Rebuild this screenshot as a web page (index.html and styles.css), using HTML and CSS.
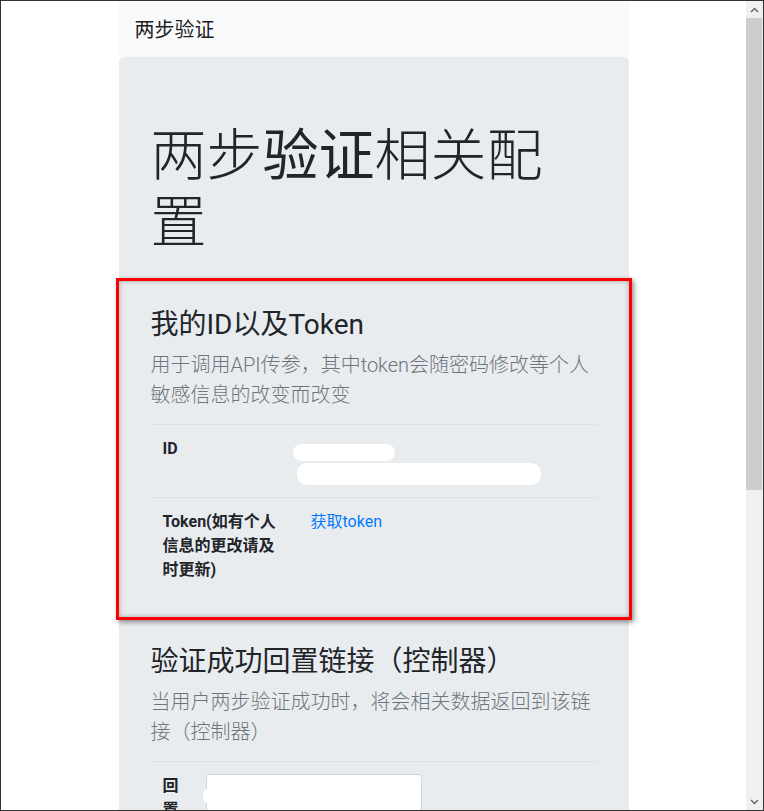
FILE: index.html
```html
<!DOCTYPE html>
<html lang="zh-CN">
<head>
<meta charset="utf-8">
<title>两步验证</title>
<link rel="stylesheet" href="styles.css">
</head>
<body>
<div class="window">
  <div class="viewport">
    <div class="container">
      <nav class="navbar"><span class="brand">两步验证</span></nav>
      <div class="jumbotron">
        <h1 class="display">两步<span class="reg">验证</span>相关配置</h1>

        <section class="panel annotated">
          <h3 class="panel-title">我的ID以及Token</h3>
          <p class="lead">用于调用API传参，其中token会随密码修改等个人敏感信息的改变而改变</p>
          <table class="table">
            <tr>
              <th class="label-wide">ID</th>
              <td><span class="redact r1"></span><span class="redact r2"></span></td>
            </tr>
            <tr>
              <th class="label-wide">Token(如有个人信息的更改请及时更新)</th>
              <td><a class="link" href="#">获取token</a></td>
            </tr>
          </table>
        </section>

        <section class="panel">
          <h3 class="panel-title">验证成功回置链接（控制器）</h3>
          <p class="lead">当用户两步验证成功时，将会相关数据返回到该链接（控制器）</p>
          <table class="table">
            <tr>
              <th class="label-narrow">回置链接</th>
              <td><div class="input-wrap"><span class="redact r3"></span><input class="input" type="text" value=""></div></td>
            </tr>
          </table>
        </section>
      </div>
    </div>
  </div>
  <div class="scrollbar">
    <div class="sb-btn">
      <svg width="9" height="6" viewBox="0 0 9 6"><path d="M1 5 L4.5 1.5 L8 5" fill="none" stroke="#606060" stroke-width="1.4"/></svg>
    </div>
    <div class="sb-track"><div class="sb-thumb"></div></div>
    <div class="sb-btn">
      <svg width="9" height="6" viewBox="0 0 9 6"><path d="M1 1 L4.5 4.5 L8 1" fill="none" stroke="#606060" stroke-width="1.4"/></svg>
    </div>
  </div>
</div>
</body>
</html>
```

FILE: styles.css
```css
* { box-sizing: border-box; }

html, body {
  margin: 0;
  padding: 0;
  background: #fff;
}

body {
  font-family: Roboto, "Noto Sans CJK SC", sans-serif;
  font-size: 16px;
  line-height: 1.5;
  color: #212529;
}

.window {
  display: flex;
  width: 764px;
  height: 811px;
  border: 1px solid #333;
  overflow: hidden;
}

.viewport {
  flex: 1;
  overflow: hidden;
  background: #fff;
}

.container {
  width: 540px;
  margin: 0 auto;
  padding: 0 15px;
}

.navbar {
  display: flex;
  align-items: center;
  height: 56px;
  padding: 8px 16px;
  background: #f8f9fa;
}

.brand {
  font-size: 20px;
  line-height: 30px;
  padding-top: 2px;
  color: rgba(0, 0, 0, 0.9);
}

.jumbotron {
  background: #e9ecef;
  border-radius: 4.8px;
  padding: 66px 32px 32px;
}

.display {
  margin: 0 0 8px;
  font-size: 56px;
  line-height: 1.2;
  font-weight: 300;
  color: #212529;
}

.display .reg {
  font-weight: 400;
}

.panel-title {
  margin: 0 0 8px;
  font-size: 28px;
  line-height: 1.2;
  font-weight: 400;
}

.lead {
  margin: 0 0 14px;
  font-size: 20px;
  line-height: 30px;
  font-weight: 300;
  color: #6c757d;
}

.panel {
  margin-top: 0;
}

.annotated {
  margin: 21px -35px 25px;
  padding: 27px 32px 23px;
  border: 3px solid #ff0000;
  box-shadow: 2px 2px 5px rgba(0, 0, 0, 0.45), inset 0 0 5px rgba(0, 0, 0, 0.3);
}

.table {
  width: 100%;
  border-collapse: collapse;
  margin: 0;
}

.table th,
.table td {
  padding: 12px;
  border-top: 1px solid #dee2e6;
  vertical-align: top;
  text-align: left;
}

.table th {
  font-weight: 700;
}

.label-wide {
  width: 148px;
}

.label-narrow {
  width: 43px;
}

.link {
  color: #007bff;
  text-decoration: none;
}

.redact {
  display: block;
  background: #fff;
  border-radius: 10px;
}

.r1 {
  width: 102px;
  height: 17px;
  margin: 7px 0 0 -18px;
}

.r2 {
  width: 244px;
  height: 22px;
  margin: 2px 0 0 -14px;
}

.input-wrap {
  display: flex;
  align-items: flex-start;
}

.r3 {
  width: 14px;
  height: 16px;
  margin: 14px -11px 0 -3px;
  position: relative;
  z-index: 1;
}

.input {
  display: block;
  width: 216px;
  height: 38px;
  padding: 6px 12px;
  border: 1px solid #ced4da;
  border-radius: 4px;
  background: #fff;
  font: inherit;
}

.scrollbar {
  width: 17px;
  display: flex;
  flex-direction: column;
  background: #f0f0f0;
}

.sb-btn {
  height: 17px;
  display: flex;
  align-items: center;
  justify-content: center;
}

.sb-track {
  flex: 1;
  padding-top: 0;
}

.sb-thumb {
  height: 472px;
  margin: 0 1px 0 0;
  background: #cdcdcd;
}
```
